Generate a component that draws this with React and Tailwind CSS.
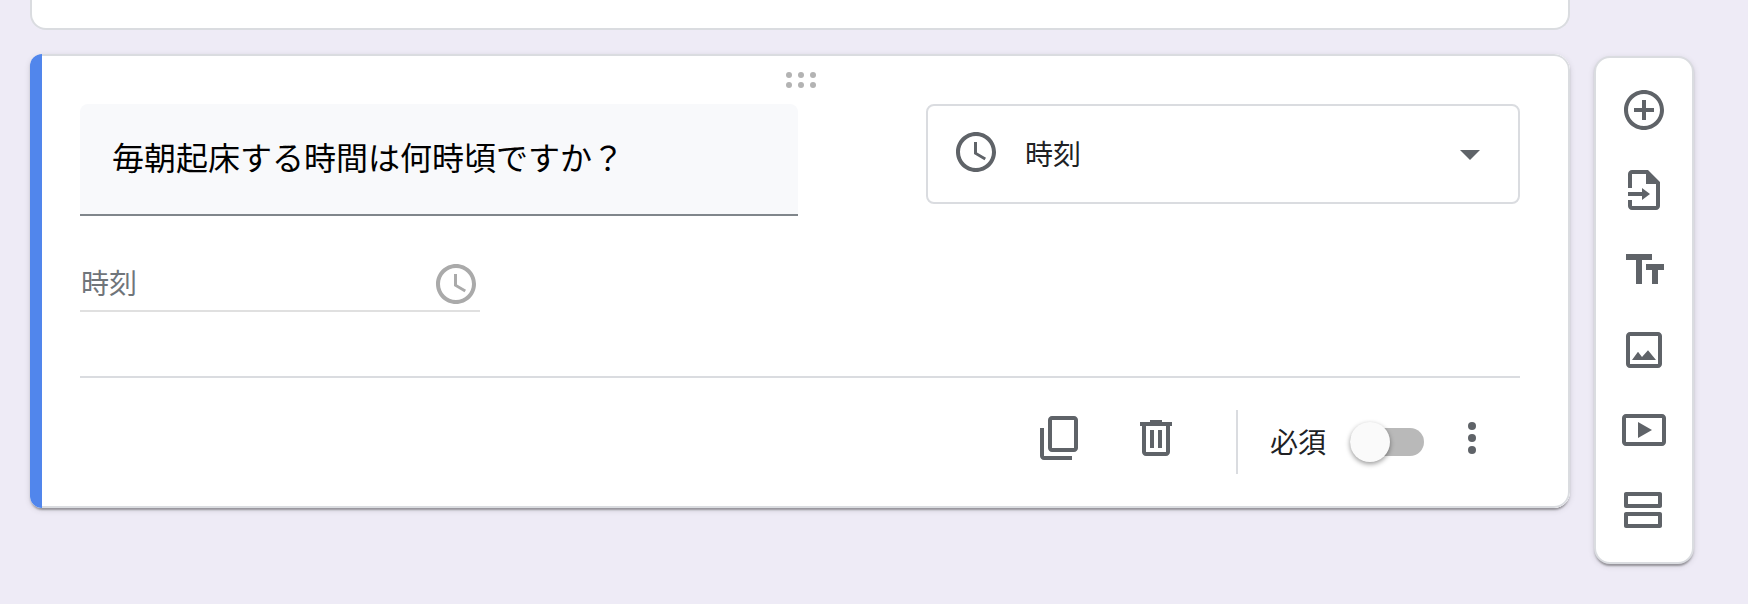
import React, { useState } from "react";

// ---------------- Icons ----------------
const Icon = ({ children, className = "" }) => (
  <svg viewBox="0 0 24 24" fill="currentColor" className={`size-12 shrink-0 ${className}`}>
    {children}
  </svg>
);

const ClockIcon = ({ className }) => (
  <Icon className={className}>
    <path d="M12 2C6.48 2 2 6.48 2 12s4.48 10 10 10 10-4.48 10-10S17.52 2 12 2zm0 18c-4.42 0-8-3.58-8-8s3.58-8 8-8 8 3.58 8 8-3.58 8-8 8z" />
    <path d="M12.5 7H11v6l5.25 3.15.75-1.23-4.5-2.67z" />
  </Icon>
);

const CopyIcon = () => (
  <Icon>
    <path
      fillRule="evenodd"
      d="M8 1h11c1.1 0 2 .9 2 2v14c0 1.1-.9 2-2 2H8c-1.1 0-2-.9-2-2V3c0-1.1.9-2 2-2zm0 2v14h11V3H8zM2 7h2v14h14v2H4c-1.1 0-2-.9-2-2V7z"
    />
  </Icon>
);

const TrashIcon = () => (
  <Icon>
    <path d="M15 4V3H9v1H4v2h1v13c0 1.1.9 2 2 2h10c1.1 0 2-.9 2-2V6h1V4h-5zm2 15H7V6h10v13z" />
    <path d="M9 8h2v9H9zm4 0h2v9h-2z" />
  </Icon>
);

const MoreIcon = () => (
  <Icon>
    <circle cx="12" cy="6" r="2" />
    <circle cx="12" cy="12" r="2" />
    <circle cx="12" cy="18" r="2" />
  </Icon>
);

const tools = [
  {
    label: "質問を追加",
    icon: (
      <path d="M13 7h-2v4H7v2h4v4h2v-4h4v-2h-4V7zm-1-5C6.48 2 2 6.48 2 12s4.48 10 10 10 10-4.48 10-10S17.52 2 12 2zm0 18c-4.41 0-8-3.59-8-8s3.59-8 8-8 8 3.59 8 8-3.59 8-8 8z" />
    ),
  },
  {
    label: "質問をインポート",
    icon: (
      <path d="M14 2H6C4.9 2 4 2.9 4 4v7h2V4h7v5h5v11H6v-3H4v3c0 1.1.9 2 2 2h12c1.1 0 2-.9 2-2V8l-6-6zM4 15h7v2l4-3-4-3v2H4z" />
    ),
  },
  {
    label: "タイトルと説明を追加",
    icon: <path d="M3 4v3h5v12h3V7h5V4H3zm19 5h-9v3h3v7h3v-7h3V9z" />,
  },
  {
    label: "画像を追加",
    icon: (
      <path
        fillRule="evenodd"
        d="M5 3h14c1.1 0 2 .9 2 2v14c0 1.1-.9 2-2 2H5c-1.1 0-2-.9-2-2V5c0-1.1.9-2 2-2zm0 2v14h14V5H5zm1 12l3-4.1 2 2.6 3-3.4 4 4.9z"
      />
    ),
  },
  {
    label: "動画を追加",
    icon: (
      <path
        fillRule="evenodd"
        d="M3 4h18c1.1 0 2 .9 2 2v12c0 1.1-.9 2-2 2H3c-1.1 0-2-.9-2-2V6c0-1.1.9-2 2-2zm0 2v12h18V6H3zm6 2l7 4-7 4z"
      />
    ),
  },
  {
    label: "セクションを追加",
    icon: (
      <path
        fillRule="evenodd"
        d="M3 3h17c.55 0 1 .45 1 1v6c0 .55-.45 1-1 1H3c-.55 0-1-.45-1-1V4c0-.55.45-1 1-1zm1 2v4h15V5H4zM3 13h17c.55 0 1 .45 1 1v6c0 .55-.45 1-1 1H3c-.55 0-1-.45-1-1v-6c0-.55.45-1 1-1zm1 2v4h15v-4H4z"
      />
    ),
  },
];

// ---------------- Drag handle ----------------
function DragHandle() {
  return (
    <div className="ml-[706px] grid w-[30px] grid-cols-3 gap-x-1.5 gap-y-1">
      {[0, 1, 2, 3, 4, 5].map((i) => (
        <span key={i} className="size-1.5 rounded-full bg-[#b3b3b3]" />
      ))}
    </div>
  );
}

// ---------------- Required switch ----------------
function Toggle({ on, onChange }) {
  return (
    <button
      role="switch"
      aria-checked={on}
      aria-label="必須"
      onClick={() => onChange(!on)}
      className="flex h-7 w-[74px] items-center rounded-full bg-[#b9b9b9]"
    >
      <span
        className={`size-10 shrink-0 rounded-full bg-[#fafafa] shadow-[0_2px_5px_rgba(0,0,0,0.4)] ${
          on ? "ml-[34px]" : ""
        }`}
      />
    </button>
  );
}

// ---------------- Question card ----------------
function QuestionCard() {
  const [required, setRequired] = useState(false);

  return (
    <section className="flex h-[454px] w-[1540px] overflow-hidden rounded-l-xl rounded-r-2xl bg-white">
      <div className="w-3 shrink-0 bg-[#5186ec]" />
      <div className="flex-1 rounded-r-2xl border-y-2 border-r-2 border-[#dadce0] pt-4 pr-12 pl-[38px]">
        <DragHandle />

        <div className="mt-4 flex items-start justify-between">
          <div className="flex h-28 w-[718px] items-center rounded-t-lg border-b-2 border-[#80868b] bg-[#f8f9fb] px-8 pb-1.5 text-[32px] leading-none text-black">
            毎朝起床する時間は何時頃ですか？
          </div>
          <div className="flex h-[100px] w-[594px] items-center rounded-lg border-2 border-[#dadce0] px-6 text-[#5f6368]">
            <ClockIcon className="-mt-1" />
            <span className="ml-[25px] flex-1 pb-[3px] text-[28px] leading-none text-[#202124]">
              時刻
            </span>
            <Icon>
              <path d="M7 10l5 5 5-5z" />
            </Icon>
          </div>
        </div>

        <div className="mt-10 flex h-14 w-[400px] items-center justify-between border-b-2 border-[#e0e0e0]">
          <span className="pb-0.5 pl-px text-[28px] leading-none text-[#70757a]">時刻</span>
          <ClockIcon className="mt-0.5 text-[#aaaaaa]" />
        </div>

        <div className="mt-16 flex h-[130px] items-start justify-end border-t-2 border-[#dadce0] pt-8 pr-6 text-[#5f6368]">
          <button className="mt-1 mr-12">
            <CopyIcon />
          </button>
          <button className="mt-1 mr-14">
            <TrashIcon />
          </button>
          <div className="flex h-16 items-center border-l-2 border-[#dadce0] pl-8">
            <span className="pb-[3px] text-[28px] leading-none text-[#202124]">必須</span>
            <div className="mx-6">
              <Toggle on={required} onChange={setRequired} />
            </div>
          </div>
          <button className="mt-1">
            <MoreIcon />
          </button>
        </div>
      </div>
    </section>
  );
}

// ---------------- Side toolbar ----------------
function Toolbar() {
  return (
    <aside className="mt-0.5 flex h-[508px] w-[100px] flex-col items-center gap-8 rounded-2xl border-2 border-[#dadce0] bg-white pt-7 text-[#5f6368] shadow-[0_4px_2px_-2px_rgba(0,0,0,0.2),0_2px_2px_rgba(0,0,0,0.14),0_2px_6px_rgba(0,0,0,0.12)]">
      {tools.map((tool) => (
        <button key={tool.label} aria-label={tool.label}>
          <Icon>{tool.icon}</Icon>
        </button>
      ))}
    </aside>
  );
}

function App() {
  return (
    <div className="h-[604px] w-[1748px] overflow-hidden bg-[#eeebf6] pl-[30px] font-['Noto_Sans_CJK_JP',sans-serif]">
      {/* Bottom edge of the previous question */}
      <div className="h-[30px] w-[1540px] rounded-b-2xl border-x-2 border-b-2 border-[#dadce0] bg-white" />

      <div className="mt-6 flex items-start gap-6">
        <div className="rounded-l-xl rounded-r-2xl shadow-[0_4px_2px_-2px_rgba(0,0,0,0.2),0_2px_2px_rgba(0,0,0,0.14),0_2px_6px_rgba(0,0,0,0.12)]">
          <QuestionCard />
        </div>
        <Toolbar />
      </div>
    </div>
  );
}

export default App;
